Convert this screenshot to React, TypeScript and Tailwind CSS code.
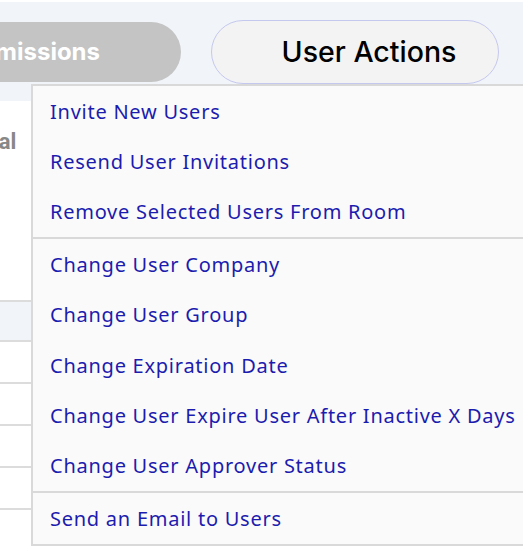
import type { ReactNode } from "react";

const groups: string[][] = [
  ["Invite New Users", "Resend User Invitations", "Remove Selected Users From Room"],
  [
    "Change User Company",
    "Change User Group",
    "Change Expiration Date",
    "Change User Expire User After Inactive X Days",
    "Change User Approver Status",
  ],
  ["Send an Email to Users"],
];

function MenuItem({ children }: { children: ReactNode }) {
  return (
    <button className="flex h-[50.4px] w-full items-center whitespace-nowrap pl-[17px] pt-[1px] text-left text-[20px] tracking-[0.75px] text-[#1c1cae]">
      {children}
    </button>
  );
}

export default function App() {
  return (
    <div className="relative h-[548px] w-[523px] overflow-hidden bg-white font-['Noto_Sans',sans-serif]">
      {/* toolbar */}
      <div className="mt-[2px] flex h-[99px] items-start gap-[30px] bg-[#f1f4f9] pt-[18px]">
        <div className="-ml-[110px] mt-[2px] flex h-[60px] w-[291px] items-center justify-end whitespace-nowrap rounded-full bg-[#c4c4c4] pr-[81px] font-['Inter',sans-serif] text-[24px] font-bold text-white">
          Permissions
        </div>
        <button className="flex h-[64px] w-[288px] items-center justify-center rounded-full border border-[#c5c8ee] bg-[#f3f3f3] pl-[28px] font-['Inter',sans-serif] text-[28.5px] font-medium text-black">
          User Actions
        </button>
      </div>

      {/* page body behind the menu */}
      <div className="pt-[24px]">
        <div className="-ml-[33px] font-['Roboto',sans-serif] text-[22px] font-bold text-[#888888]">
          Total
        </div>
        <div className="mt-[142px]">
          <div className="h-[42px] border-y-2 border-[#dcdcdc] bg-[#f1f4f9]" />
          <div className="h-[42px] border-b-2 border-[#dcdcdc]" />
          <div className="h-[42px] border-b-2 border-[#dcdcdc]" />
          <div className="h-[42px] border-b-2 border-[#dcdcdc]" />
          <div className="h-[42px] border-b-2 border-[#dcdcdc]" />
        </div>
      </div>

      {/* dropdown menu */}
      <div className="absolute left-[31px] top-[84px] w-[520px] border-2 border-[#d9d9d9] bg-[#fafafa]">
        {groups.map((items, i) => (
          <div key={i} className={i > 0 ? "border-t-2 border-[#d9d9d9]" : ""}>
            {items.map((label) => (
              <MenuItem key={label}>{label}</MenuItem>
            ))}
          </div>
        ))}
      </div>
    </div>
  );
}
